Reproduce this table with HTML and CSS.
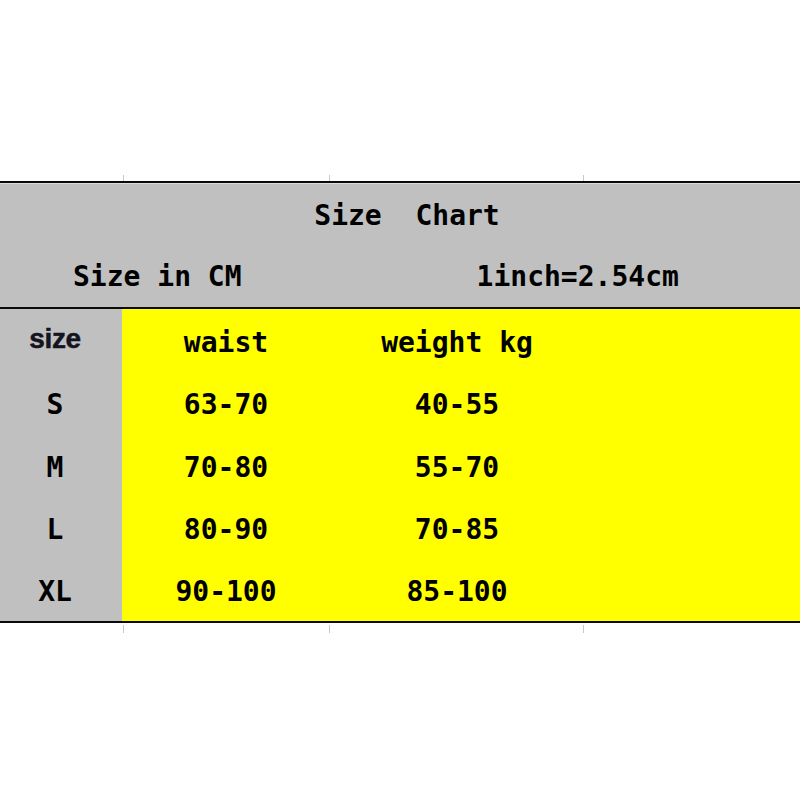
FILE: index.html
```html
<!DOCTYPE html>
<html>
<head>
<meta charset="utf-8">
<link rel="stylesheet" href="styles.css">
</head>
<body>
<div class="sheet">
  <div class="ticks ticks-top">
    <span class="tick t1"></span><span class="tick t2"></span><span class="tick t3"></span>
  </div>
  <div class="chart">
    <div class="head">
      <div class="title">Size  Chart</div>
      <div class="units">
        <span class="unit-left">Size in CM</span>
        <span class="unit-right">1inch=2.54cm</span>
      </div>
    </div>
    <div class="body">
      <div class="row">
        <div class="cell size-head">size</div>
        <div class="cell">waist</div>
        <div class="cell">weight kg</div>
        <div class="cell"></div>
      </div>
      <div class="row">
        <div class="cell size">S</div>
        <div class="cell">63-70</div>
        <div class="cell">40-55</div>
        <div class="cell"></div>
      </div>
      <div class="row">
        <div class="cell size">M</div>
        <div class="cell">70-80</div>
        <div class="cell">55-70</div>
        <div class="cell"></div>
      </div>
      <div class="row">
        <div class="cell size">L</div>
        <div class="cell">80-90</div>
        <div class="cell">70-85</div>
        <div class="cell"></div>
      </div>
      <div class="row">
        <div class="cell size">XL</div>
        <div class="cell">90-100</div>
        <div class="cell">85-100</div>
        <div class="cell"></div>
      </div>
    </div>
  </div>
  <div class="ticks ticks-bottom">
    <span class="tick t1"></span><span class="tick t2"></span><span class="tick t3"></span>
  </div>
</div>
</body>
</html>
```

FILE: styles.css
```css
html, body {
  margin: 0;
  padding: 0;
  background: #ffffff;
}

body {
  width: 800px;
  height: 800px;
  overflow: hidden;
  font-family: "DejaVu Sans Mono", "Liberation Mono", monospace;
  font-weight: bold;
  color: #000;
}

.sheet {
  padding-top: 175px;
}

.ticks {
  display: flex;
  height: 6px;
}

.ticks-bottom {
  height: 8px;
  margin-top: 2px;
}

.tick {
  width: 1px;
  background: #c8c8c8;
}

.t1 { margin-left: 123px; }
.t2 { margin-left: 205px; }
.t3 { margin-left: 253px; }

.chart {
  border-top: 2px solid #0a0a0a;
  border-bottom: 2px solid #0a0a0a;
}

.head {
  background: #c0c0c0;
  border-top: 1px solid #dcdcdc;
  border-bottom: 2px solid #0a0a0a;
  height: 123px;
  display: flex;
  flex-direction: column;
}

.title {
  height: 62px;
  display: flex;
  align-items: center;
  justify-content: center;
  padding-left: 14px;
  white-space: pre;
  font-size: 28px;
}

.units {
  height: 61px;
  display: flex;
  align-items: center;
  font-size: 28px;
  white-space: pre;
}

.unit-left {
  margin-left: 73px;
}

.unit-right {
  margin-left: 235px;
}

.body {
  display: flex;
  flex-direction: column;
  height: 312px;
}

.row {
  flex: 1;
  display: grid;
  grid-template-columns: 122px 208px 254px 1fr;
}

.cell {
  background: #ffff00;
  display: flex;
  align-items: center;
  justify-content: center;
  font-size: 28px;
  padding-top: 4px;
  white-space: pre;
}

.row .cell:first-child {
  background: #c0c0c0;
  padding-right: 12px;
}

.size-head {
  font-family: "Liberation Sans", Arial, sans-serif;
  font-size: 28px;
  letter-spacing: -0.4px;
  -webkit-text-stroke: 0.5px #14141e;
  color: #14141e;
  padding-top: 0;
  padding-bottom: 2px;
}
```
